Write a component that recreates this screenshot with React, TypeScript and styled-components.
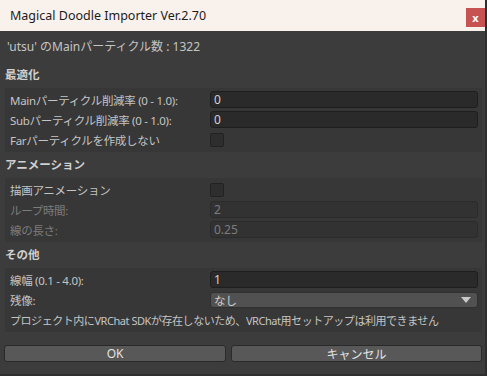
import styled, { createGlobalStyle } from "styled-components";

const GlobalStyle = createGlobalStyle`
  html, body {
    margin: 0;
    padding: 0;
    background: #3c3c3c;
  }
  body {
    font-family: "Noto Sans", "Noto Sans CJK JP", sans-serif;
  }
`;

type Row =
  | { kind: "input"; label: string; value: string; disabled?: boolean }
  | { kind: "check"; label: string; disabled?: boolean }
  | { kind: "select"; label: string; value: string }
  | { kind: "note"; label: string };

const sections: { title: string; rows: Row[] }[] = [
  {
    title: "最適化",
    rows: [
      { kind: "input", label: "Mainパーティクル削減率 (0 - 1.0):", value: "0" },
      { kind: "input", label: "Subパーティクル削減率 (0 - 1.0):", value: "0" },
      { kind: "check", label: "Farパーティクルを作成しない" },
    ],
  },
  {
    title: "アニメーション",
    rows: [
      { kind: "check", label: "描画アニメーション" },
      { kind: "input", label: "ループ時間:", value: "2", disabled: true },
      { kind: "input", label: "線の長さ:", value: "0.25", disabled: true },
    ],
  },
  {
    title: "その他",
    rows: [
      { kind: "input", label: "線幅 (0.1 - 4.0):", value: "1" },
      { kind: "select", label: "残像:", value: "なし" },
      {
        kind: "note",
        label:
          "プロジェクト内にVRChat SDKが存在しないため、VRChat用セットアップは利用できません",
      },
    ],
  },
];

export default function App() {
  return (
    <>
      <GlobalStyle />
      <Window>
        <TitleBar>
          <Title>Magical Doodle Importer Ver.2.70</Title>
          <CloseButton>x</CloseButton>
        </TitleBar>
        <Body>
          <Info>'utsu' のMainパーティクル数 : 1322</Info>
          {sections.map((s) => (
            <div key={s.title}>
              <Header>{s.title}</Header>
              <Group>
                {s.rows.map((r) => {
                  if (r.kind === "note") {
                    return <Note key={r.label}>{r.label}</Note>;
                  }
                  const disabled = "disabled" in r && !!r.disabled;
                  return (
                    <FieldRow key={r.label}>
                      <Label $disabled={disabled}>{r.label}</Label>
                      {r.kind === "input" && (
                        <Input $disabled={disabled}>{r.value}</Input>
                      )}
                      {r.kind === "check" && <Check />}
                      {r.kind === "select" && (
                        <Select>
                          <span>{r.value}</span>
                          <svg width="10" height="6" viewBox="0 0 10 6">
                            <path d="M0 0 L10 0 L5 6 Z" fill="#c8c8c8" />
                          </svg>
                        </Select>
                      )}
                    </FieldRow>
                  );
                })}
              </Group>
            </div>
          ))}
          <Buttons>
            <Button $grow={222}>OK</Button>
            <Button $grow={251}>キャンセル</Button>
          </Buttons>
        </Body>
      </Window>
    </>
  );
}

const Window = styled.div`
  width: 487px;
  height: 376px;
  box-sizing: border-box;
  border-right: 2px solid #2e2e2e;
  border-bottom: 2px solid #2e2e2e;
  display: flex;
  flex-direction: column;
  background: #3c3c3c;
  overflow: hidden;
`;

const TitleBar = styled.div`
  height: 31px;
  flex: none;
  background: #f9f1ec;
  display: flex;
  align-items: center;
  justify-content: space-between;
  padding-left: 10px;
`;

const Title = styled.div`
  font-size: 12.5px;
  color: #1c1c1c;
`;

const CloseButton = styled.div`
  width: 19px;
  height: 19px;
  margin-top: 4px;
  background: #c75252;
  color: #fff;
  font-weight: bold;
  font-size: 11px;
  display: flex;
  align-items: center;
  justify-content: center;
  line-height: 1;
`;

const Body = styled.div`
  padding: 7px 3px 0 5px;
  display: flex;
  flex-direction: column;
`;

const Info = styled.div`
  padding-left: 2px;
  font-size: 12px;
  line-height: 18px;
  color: #c4c4c4;
  margin-bottom: 6px;
`;

const Header = styled.div`
  font-size: 11.5px;
  font-weight: bold;
  line-height: 26px;
  color: #d0d0d0;
`;

const Group = styled.div`
  background: #373737;
  padding: 3px 4px 1px 5px;
  display: flex;
  flex-direction: column;
  gap: 3px;
  min-height: 60px;
`;

const FieldRow = styled.div`
  display: grid;
  grid-template-columns: 200px 1fr;
  align-items: center;
  height: 17px;
`;

const Label = styled.div<{ $disabled?: boolean }>`
  font-size: 11.5px;
  letter-spacing: -0.3px;
  color: ${(p) => (p.$disabled ? "#7c7c7c" : "#c4c4c4")};
  white-space: nowrap;
`;

const Input = styled.div<{ $disabled?: boolean }>`
  height: 17px;
  box-sizing: border-box;
  border: 1px solid ${(p) => (p.$disabled ? "#2b2b2b" : "#1e1e1e")};
  border-radius: 3px;
  background: ${(p) => (p.$disabled ? "#323232" : "#2a2a2a")};
  color: ${(p) => (p.$disabled ? "#7c7c7c" : "#d2d2d2")};
  font-size: 12px;
  line-height: 15px;
  padding-left: 3px;
`;

const Check = styled.div`
  width: 14px;
  height: 14px;
  box-sizing: border-box;
  border: 1px solid #222;
  border-radius: 2px;
  background: #2e2e2e;
`;

const Select = styled.div`
  height: 16px;
  box-sizing: border-box;
  border: 1px solid #303030;
  border-radius: 3px;
  background: #515151;
  color: #d2d2d2;
  font-size: 11.5px;
  padding: 0 6px 0 3px;
  display: flex;
  align-items: center;
  justify-content: space-between;
`;

const Note = styled.div`
  font-size: 11px;
  letter-spacing: -0.45px;
  line-height: 20px;
  color: #c4c4c4;
  white-space: nowrap;
`;

const Buttons = styled.div`
  display: flex;
  gap: 5px;
  margin-top: 13px;
  padding-left: 0;
  margin-left: -1px;
`;

const Button = styled.div<{ $grow: number }>`
  flex: ${(p) => p.$grow} 1 0;
  height: 17px;
  box-sizing: border-box;
  border: 1px solid #2a2a2a;
  border-radius: 3px;
  background: #585858;
  color: #e2e2e2;
  font-size: 12px;
  display: flex;
  align-items: center;
  justify-content: center;
`;
